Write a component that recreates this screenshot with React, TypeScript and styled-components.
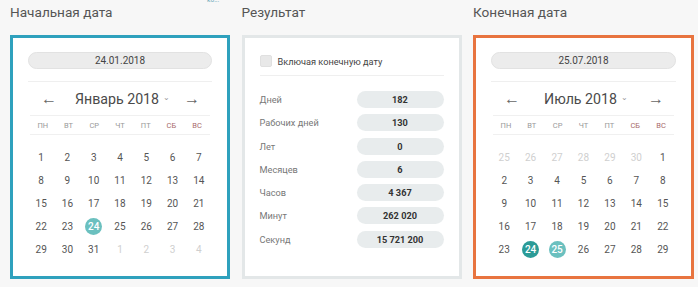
import React from "react";
import styled, { createGlobalStyle } from "styled-components";

const GlobalStyle = createGlobalStyle`
  body {
    margin: 0;
    background: #f7f7f7;
    font-family: Roboto, "Noto Sans", sans-serif;
    color: #555;
  }
`;

type Day = { n: number; muted?: boolean; mark?: "start" | "end" };

const WEEKDAYS = ["пн", "вт", "ср", "чт", "пт", "сб", "вс"];

const range = (a: number, b: number, muted = false): Day[] =>
  Array.from({ length: b - a + 1 }, (_, i) => ({ n: a + i, muted }));

const januaryDays: Day[] = [...range(1, 31), ...range(1, 4, true)].map((d) =>
  !d.muted && d.n === 24 ? { ...d, mark: "end" } : d
);

const julyDays: Day[] = [...range(25, 30, true), ...range(1, 29)].map((d) => {
  if (d.muted) return d;
  if (d.n === 24) return { ...d, mark: "start" };
  if (d.n === 25) return { ...d, mark: "end" };
  return d;
});

const results = [
  ["Дней", "182"],
  ["Рабочих дней", "130"],
  ["Лет", "0"],
  ["Месяцев", "6"],
  ["Часов", "4 367"],
  ["Минут", "262 020"],
  ["Секунд", "15 721 200"],
];

const Calendar = ({ date, month, days }: { date: string; month: string; days: Day[] }) => (
  <>
    <DateInput>{date}</DateInput>
    <Divider />
    <MonthHeader>
      <Arrow>←</Arrow>
      <MonthTitle>
        {month}
        <Chevron>⌄</Chevron>
      </MonthTitle>
      <Arrow>→</Arrow>
    </MonthHeader>
    <WeekRow>
      {WEEKDAYS.map((w, i) => (
        <WeekDay key={w} $weekend={i > 4}>
          {w}
        </WeekDay>
      ))}
    </WeekRow>
    <DaysGrid>
      {days.map((d, i) => (
        <DayCell key={i}>
          <DayNum $muted={d.muted} $mark={d.mark}>
            {d.n}
          </DayNum>
        </DayCell>
      ))}
    </DaysGrid>
  </>
);

export default function App() {
  return (
    <>
      <GlobalStyle />
      <Page>
        <Column>
          <Title>Начальная дата</Title>
          <Hint>ко...</Hint>
          <Panel $border="#2fa1bd">
            <Calendar date="24.01.2018" month="Январь 2018" days={januaryDays} />
          </Panel>
        </Column>
        <Column>
          <Title>Результат</Title>
          <Panel $border="#e3e7e8">
            <CheckRow>
              <CheckBox />
              <CheckLabel>Включая конечную дату</CheckLabel>
            </CheckRow>
            <Divider $gap={8} />
            <ResultList>
              {results.map(([label, value]) => (
                <ResultRow key={label}>
                  <ResultLabel>{label}</ResultLabel>
                  <ResultValue>{value}</ResultValue>
                </ResultRow>
              ))}
            </ResultList>
          </Panel>
        </Column>
        <Column>
          <Title>Конечная дата</Title>
          <Panel $border="#e8743f">
            <Calendar date="25.07.2018" month="Июль 2018" days={julyDays} />
          </Panel>
        </Column>
      </Page>
    </>
  );
}

const Page = styled.div`
  display: grid;
  grid-template-columns: 220px 220px 221px;
  column-gap: 11.5px;
  padding: 0 0 0 10px;
`;

const Column = styled.section`
  position: relative;
  display: flex;
  flex-direction: column;
`;

const Title = styled.h2`
  margin: 0;
  height: 35px;
  padding-top: 4px;
  box-sizing: border-box;
  font-size: 13.6px;
  font-weight: 400;
  color: #555;
`;

const Hint = styled.span`
  position: absolute;
  top: -4px;
  left: 197px;
  font-size: 6.5px;
  line-height: 8px;
  color: #6aa8b8;
`;

const Panel = styled.div<{ $border: string }>`
  width: 100%;
  height: 244px;
  box-sizing: border-box;
  background: #fff;
  border: 3px solid ${(p) => p.$border};
  padding: 14px 15px 0 15px;
  display: flex;
  flex-direction: column;
`;

const DateInput = styled.div`
  height: 17px;
  border-radius: 9px;
  background: #ececec;
  border: 1px solid #e2e2e2;
  box-sizing: border-box;
  display: flex;
  align-items: center;
  justify-content: center;
  font-size: 10px;
  color: #444;
`;

const Divider = styled.div<{ $gap?: number }>`
  height: 1px;
  background: #efefef;
  margin-top: ${(p) => p.$gap ?? 12}px;
`;

const MonthHeader = styled.div`
  height: 33px;
  display: flex;
  align-items: center;
  justify-content: space-between;
  padding: 0 12px 0 13px;
`;

const Arrow = styled.span`
  font-size: 16px;
  color: #666;
  line-height: 1;
`;

const MonthTitle = styled.div`
  font-size: 14.2px;
  color: #4a4a4a;
  display: flex;
  align-items: center;
  margin-left: 4px;
`;

const Chevron = styled.span`
  font-size: 8px;
  color: #999;
  margin-left: 4px;
  margin-top: -3px;
`;

const WeekRow = styled.div`
  display: grid;
  grid-template-columns: repeat(7, 1fr);
  height: 18px;
  align-items: center;
  border-top: 1px solid #f0f0f0;
  border-bottom: 1px solid #f0f0f0;
  margin: 0 2px;
`;

const WeekDay = styled.span<{ $weekend?: boolean }>`
  text-align: center;
  font-size: 7.5px;
  text-transform: uppercase;
  color: ${(p) => (p.$weekend ? "#a86a6a" : "#999")};
`;

const DaysGrid = styled.div`
  display: grid;
  grid-template-columns: repeat(7, 1fr);
  grid-auto-rows: 23px;
  margin-top: 11px;
`;

const DayCell = styled.div`
  display: flex;
  align-items: center;
  justify-content: center;
`;

const DayNum = styled.span<{ $muted?: boolean; $mark?: "start" | "end" }>`
  width: 17px;
  height: 17px;
  border-radius: 50%;
  display: flex;
  align-items: center;
  justify-content: center;
  font-size: 10px;
  color: ${(p) => (p.$mark ? "#fff" : p.$muted ? "#cfcfcf" : "#555")};
  font-weight: ${(p) => (p.$mark ? 500 : 400)};
  background: ${(p) =>
    p.$mark === "start" ? "#2b9b97" : p.$mark === "end" ? "#6bc0bf" : "transparent"};
`;

const CheckRow = styled.div`
  display: flex;
  align-items: center;
  gap: 6px;
  margin-top: 3px;
`;

const CheckBox = styled.span`
  width: 12px;
  height: 12px;
  border-radius: 2px;
  background: #e8e8e8;
  border: 1px solid #e0e0e0;
  box-sizing: border-box;
`;

const CheckLabel = styled.span`
  font-size: 9.2px;
  color: #444;
`;

const ResultList = styled.div`
  display: flex;
  flex-direction: column;
  gap: 6.3px;
  margin-top: 15px;
`;

const ResultRow = styled.div`
  display: flex;
  align-items: center;
  justify-content: space-between;
`;

const ResultLabel = styled.span`
  font-size: 9.2px;
  color: #777;
`;

const ResultValue = styled.span`
  width: 87px;
  height: 17px;
  border-radius: 9px;
  background: #e8eced;
  display: flex;
  align-items: center;
  justify-content: center;
  font-size: 9.2px;
  font-weight: 700;
  color: #333;
`;
